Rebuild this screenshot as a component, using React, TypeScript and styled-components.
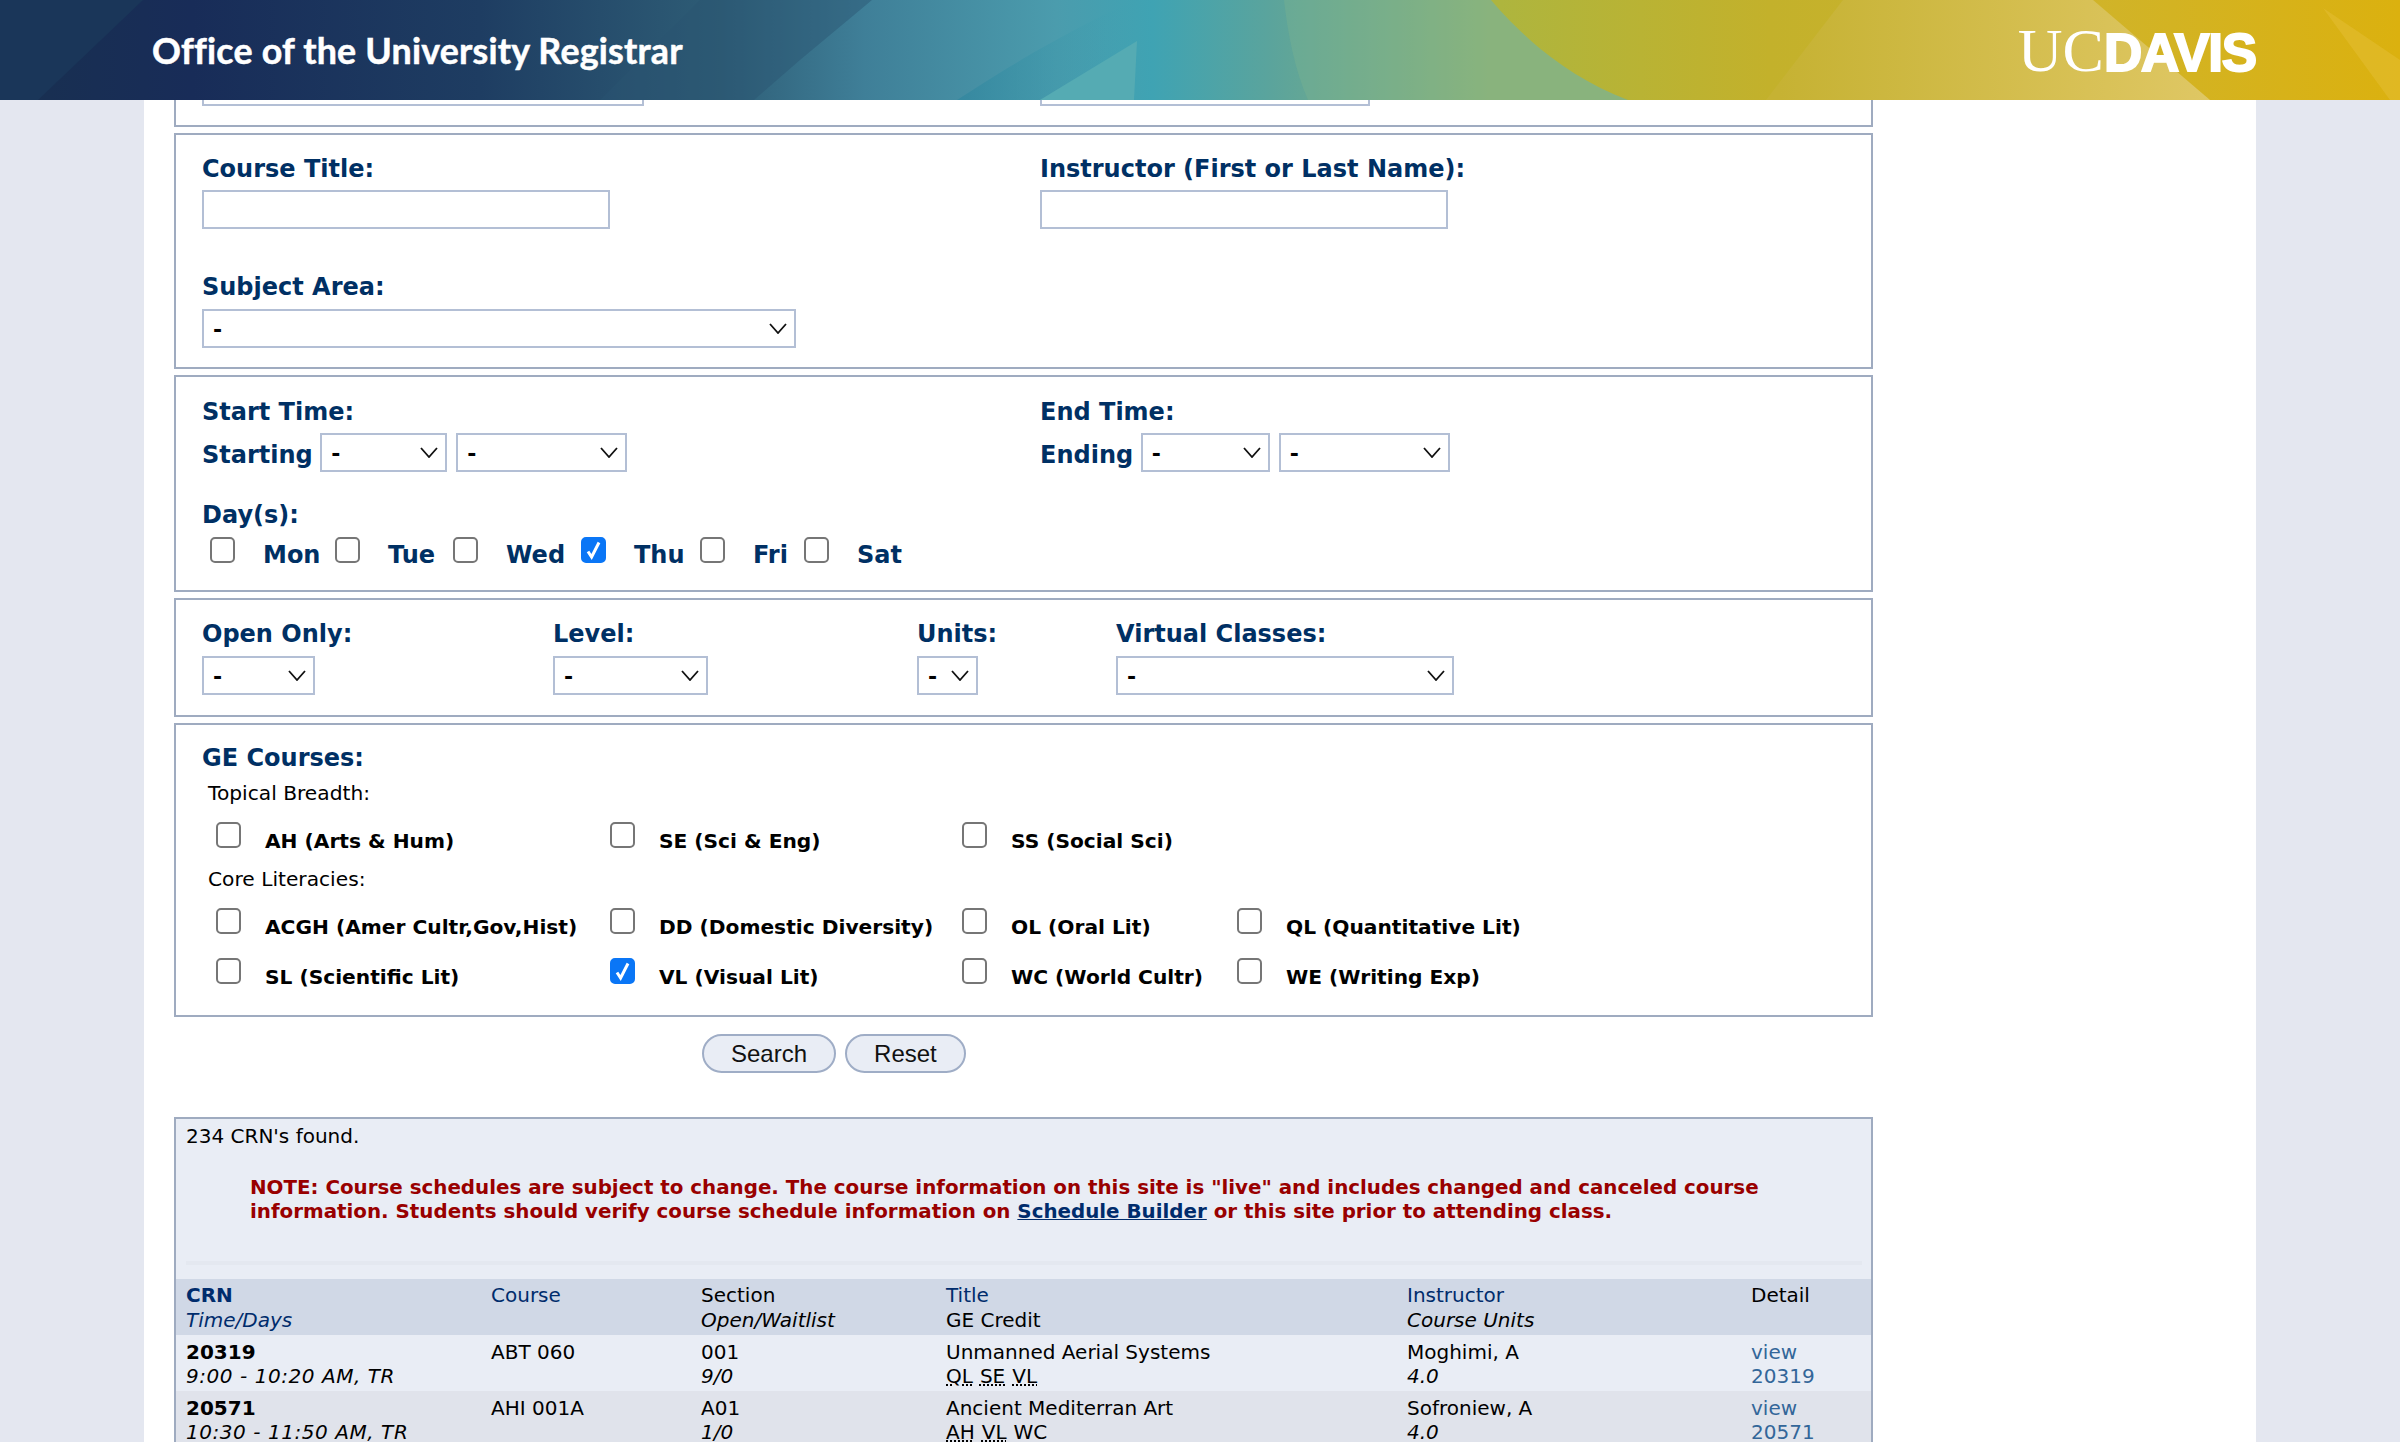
import React from "react";
import styled, { createGlobalStyle } from "styled-components";

const chevron =
  "url(\"data:image/svg+xml,%3Csvg xmlns='http://www.w3.org/2000/svg' width='18' height='11'%3E%3Cpath d='M1 1l8 9 8-9' fill='none' stroke='%23111' stroke-width='1.8'/%3E%3C/svg%3E\")";
const tick =
  "url(\"data:image/svg+xml,%3Csvg xmlns='http://www.w3.org/2000/svg' width='25' height='26'%3E%3Cpath d='M7 14.5l3.6 5.5L18 5.5' fill='none' stroke='white' stroke-width='3'/%3E%3C/svg%3E\")";

const GlobalStyle = createGlobalStyle`
    html, body {
        margin: 0;
        padding: 0;
        background: #e4e7f0;
    }
    body {
        font-family: "DejaVu Sans", Verdana, sans-serif;
        font-size: 20px;
        color: #000;
    }
`;

const Page = styled.div`
    height: 1442px;
    overflow: hidden;
`;

const Header = styled.header`
    position: fixed;
    top: 0;
    left: 0;
    right: 0;
    height: 100px;
    z-index: 10;
    display: flex;
    align-items: center;
    justify-content: space-between;
    padding: 0 144px 0 152px;
    overflow: hidden;
`;

const HeaderArt = styled.svg`
    position: absolute;
    top: 0;
    left: 0;
    z-index: -1;
`;

const SiteTitle = styled.div`
    font-family: Lato, "Open Sans", sans-serif;
    font-weight: 700;
    font-size: 35.8px;
    letter-spacing: 0.2px;
    -webkit-text-stroke: 0.5px #fff;
    color: #fff;
`;

const Logo = styled.div`
    display: flex;
    align-items: baseline;
    color: #fff;
    height: 52px;
    line-height: 52px;
`;

const LogoUc = styled.span`
    font-family: "Liberation Serif", serif;
    font-size: 62px;
    letter-spacing: 0;
`;

const LogoDavis = styled.span`
    font-family: "Liberation Sans", sans-serif;
    font-weight: 700;
    font-size: 53px;
    letter-spacing: -1.2px;
    -webkit-text-stroke: 2px #fff;
`;

const Sheet = styled.main`
    margin: 0 144px;
    height: 1442px;
    background: #fff;
    padding-left: 30px;
    box-sizing: border-box;
`;

const Box = styled.section<{ $top?: number; $bottom?: number }>`
    width: 1699px;
    box-sizing: border-box;
    border: 2px solid #9fabc0;
    margin-bottom: 6px;
    padding: ${(p) => p.$top ?? 18}px 26px ${(p) => p.$bottom ?? 19}px;
`;

const TwoCols = styled.div`
    display: grid;
    grid-template-columns: 838px 1fr;
`;

const FilterCols = styled.div`
    display: grid;
    grid-template-columns: 351px 364px 199px 1fr;
`;

const FieldLabel = styled.div<{ $gap?: number }>`
    box-sizing: border-box;
    height: 30px;
    padding-top: 1px;
    font-weight: 700;
    font-size: 24px;
    line-height: 30px;
    color: #003064;
    margin-bottom: ${(p) => p.$gap ?? 7}px;
`;

const TextInput = styled.input`
    display: block;
    box-sizing: border-box;
    width: 408px;
    height: 39px;
    border: 2px solid #b3bfd5;
    background: #fff;
    outline: none;
    border-radius: 0;
`;

const Select = styled.select<{ $width: number }>`
    display: block;
    appearance: none;
    box-sizing: border-box;
    width: ${(p) => p.$width}px;
    height: 39px;
    border: 2px solid #b3bfd5;
    border-radius: 0;
    background: #fff ${chevron} no-repeat right 7px center;
    padding: 2px 0 0 9px;
    font-family: "DejaVu Sans", sans-serif;
    font-size: 22px;
    font-weight: 700;
    color: #000;
`;

const SubjectGap = styled.div`
    height: 42px;
`;

const TimeRow = styled.div`
    display: flex;
    align-items: center;
    gap: 9px;
`;

const TimeName = styled(FieldLabel)`
    margin: 2px -1.5px 0 0;
`;

const DayGap = styled.div`
    height: 27px;
`;

const DayRow = styled.div`
    display: grid;
    grid-template-columns: 125px 118px 128px 119px 104px 1fr;
    margin-top: 8px;
    padding-left: 8px;
`;

const DayItem = styled.label`
    display: flex;
    align-items: flex-start;
    gap: 28px;
    font-weight: 700;
    font-size: 24px;
    line-height: 30px;
    color: #003064;
`;

const DayText = styled.span`
    margin-top: 3px;
`;

const Check = styled.input.attrs({ type: "checkbox", readOnly: true })`
    appearance: none;
    flex: none;
    box-sizing: border-box;
    width: 25px;
    height: 26px;
    margin: 0;
    border: 2px solid #767676;
    border-radius: 5px;
    background: #fff;

    &:checked {
        border-color: #0a76f6;
        background: #0a76f6 ${tick} no-repeat center;
    }
`;

const SubHead = styled.div<{ $first?: boolean }>`
    font-size: 20.2px;
    line-height: 28px;
    margin: ${(p) => (p.$first ? 7 : 0)}px 0 15px 6px;
`;

const CheckGrid = styled.div`
    display: grid;
    grid-template-columns: 394px 352px 275px 1fr;
    grid-auto-rows: 50px;
    margin-left: 14px;
`;

const CheckGridOneRow = styled(CheckGrid)`
    grid-auto-rows: 43px;
`;

const CheckItem = styled.label`
    display: flex;
    align-items: flex-start;
    gap: 24px;
    font-weight: 700;
    font-size: 20.2px;
    line-height: 30px;
`;

const CheckText = styled.span`
    margin-top: 4px;
    white-space: nowrap;
`;

const ButtonRow = styled.div`
    display: flex;
    gap: 9px;
    margin-top: 17px;
    padding-left: 528px;
`;

const Button = styled.button`
    box-sizing: border-box;
    height: 39px;
    padding: 0 27px;
    border: 2px solid #9fadc6;
    border-radius: 20px;
    background: #e9edf5;
    font-family: "Liberation Sans", Arial, sans-serif;
    font-size: 24px;
    color: #111;
`;

const Results = styled.section`
    width: 1699px;
    box-sizing: border-box;
    margin-top: 44px;
    border: 2px solid #9fabc0;
    border-bottom: none;
    background: #e9edf5;
    padding-top: 3px;
`;

const Found = styled.div`
    font-size: 20px;
    line-height: 28px;
    padding-left: 10px;
`;

const Note = styled.p`
    margin: 26px 40px 0 74px;
    font-size: 19.85px;
    font-weight: 700;
    line-height: 24px;
    color: #990000;

    a {
        color: #002c6c;
        text-decoration: underline;
    }
`;

const Rule = styled.div`
    height: 4px;
    margin: 37px 9px 14px 10px;
    background: #e4e8f0;
`;

const Table = styled.table`
    width: 100%;
    table-layout: fixed;
    border-collapse: collapse;
    font-size: 20px;
`;

const HeadRow = styled.tr`
    background: #d0d8e6;

    td {
        padding: 4px 10px 2px;
        line-height: 25px;
        vertical-align: top;
    }
`;

const BodyRow = styled.tr<{ $alt?: boolean }>`
    background: ${(p) => (p.$alt ? "#e0e3eb" : "#e9edf5")};

    td {
        padding: 5px 10px 3px;
        line-height: 24px;
        vertical-align: top;
    }
`;

const Line = styled.div<{ $bold?: boolean; $italic?: boolean; $color?: string; $track?: number }>`
    font-weight: ${(p) => (p.$bold ? 700 : 400)};
    font-style: ${(p) => (p.$italic ? "italic" : "normal")};
    color: ${(p) => p.$color ?? "inherit"};
    letter-spacing: ${(p) => p.$track ?? 0}px;
    white-space: nowrap;
`;

const Abbr = styled.abbr`
    text-decoration: underline dotted;
    margin-right: 7px;
`;

const DetailLink = styled.a`
    display: block;
    color: #336699;
    text-decoration: none;
`;

const NAVY = "#002c6c";
const days = [
    { name: "Mon" },
    { name: "Tue" },
    { name: "Wed" },
    { name: "Thu", on: true },
    { name: "Fri" },
    { name: "Sat" },
];

const Dash = () => <option>-</option>;

const GeCheck = ({ text, on }: { text: string; on?: boolean }) => (
    <CheckItem>
        <Check checked={!!on} />
        <CheckText>{text}</CheckText>
    </CheckItem>
);

const Banner = () => (
    <HeaderArt width="2400" height="100" viewBox="0 0 2400 100">
        <defs>
            <linearGradient id="base" x1="0" x2="2400" y1="0" y2="0" gradientUnits="userSpaceOnUse">
                <stop offset="0" stopColor="#183050" />
                <stop offset="0.08" stopColor="#182c58" />
                <stop offset="0.2" stopColor="#1e3d62" />
                <stop offset="0.3" stopColor="#2e5d76" />
                <stop offset="0.36" stopColor="#3f7f98" />
                <stop offset="0.44" stopColor="#4b9cad" />
                <stop offset="0.48" stopColor="#3fa3b3" />
                <stop offset="0.53" stopColor="#5ba49c" />
                <stop offset="0.62" stopColor="#8fb374" />
                <stop offset="1" stopColor="#8fb374" />
            </linearGradient>
            <linearGradient id="band" x1="960" x2="1137" y1="0" y2="0" gradientUnits="userSpaceOnUse">
                <stop offset="0" stopColor="#33879f" stopOpacity="0.8" />
                <stop offset="1" stopColor="#3fa3b3" stopOpacity="0" />
            </linearGradient>
            <linearGradient id="gold" x1="1500" x2="2400" y1="0" y2="0" gradientUnits="userSpaceOnUse">
                <stop offset="0" stopColor="#aeb53e" />
                <stop offset="0.3" stopColor="#c3b12b" />
                <stop offset="0.62" stopColor="#cfb42c" />
                <stop offset="1" stopColor="#dbb10f" />
            </linearGradient>
            <linearGradient id="sheen" x1="1780" x2="2210" y1="0" y2="0" gradientUnits="userSpaceOnUse">
                <stop offset="0" stopColor="#c6b233" />
                <stop offset="1" stopColor="#dfc764" />
            </linearGradient>
        </defs>
        <rect width="2400" height="100" fill="url(#base)" />
        <path d="M0 0H143L38 100H0Z" fill="#1a3659" />
        <path d="M872 0L800 60L754 100H600L700 0Z" fill="#2a5470" opacity="0.45" />
        <path d="M1135 0C1070 30 1010 65 957 100H1040L1137 41V0Z" fill="url(#band)" />
        <path d="M1137 41L1040 100H1134Z" fill="#55abb3" />
        <path d="M1284 0C1288 35 1295 70 1308 100H1628C1570 78 1525 40 1491 0Z" fill="#7db58e" opacity="0.35" />
        <path d="M1491 0C1525 40 1570 78 1628 100H2400V0Z" fill="url(#gold)" />
        <path d="M1843 0L1766 100H2210L2093 0Z" fill="url(#sheen)" />
        <path d="M2323 8L2400 60V100H2390Z" fill="#e3bd33" opacity="0.55" />
    </HeaderArt>
);

const App: React.FC = () => (
    <Page>
        <GlobalStyle />
        <Header>
            <Banner />
            <SiteTitle>Office of the University Registrar</SiteTitle>
            <Logo>
                <LogoUc>UC</LogoUc>
                <LogoDavis>DAVIS</LogoDavis>
            </Logo>
        </Header>
        <Sheet>
            <Box $top={28}>
                <TwoCols>
                    <div>
                        <FieldLabel>Quarter:</FieldLabel>
                        <Select $width={442}><option>Spring Quarter 2025</option></Select>
                    </div>
                    <div>
                        <FieldLabel>CRN:</FieldLabel>
                        <Select $width={330}><Dash /></Select>
                    </div>
                </TwoCols>
            </Box>

            <Box>
                <TwoCols>
                    <div>
                        <FieldLabel>Course Title:</FieldLabel>
                        <TextInput />
                    </div>
                    <div>
                        <FieldLabel>Instructor (First or Last Name):</FieldLabel>
                        <TextInput />
                    </div>
                </TwoCols>
                <SubjectGap />
                <FieldLabel $gap={8}>Subject Area:</FieldLabel>
                <Select $width={594}><Dash /></Select>
            </Box>

            <Box $top={19} $bottom={20}>
                <TwoCols>
                    <div>
                        <FieldLabel>Start Time:</FieldLabel>
                        <TimeRow>
                            <TimeName>Starting</TimeName>
                            <Select $width={127}><Dash /></Select>
                            <Select $width={171}><Dash /></Select>
                        </TimeRow>
                    </div>
                    <div>
                        <FieldLabel>End Time:</FieldLabel>
                        <TimeRow>
                            <TimeName>Ending</TimeName>
                            <Select $width={129}><Dash /></Select>
                            <Select $width={171}><Dash /></Select>
                        </TimeRow>
                    </div>
                </TwoCols>
                <DayGap />
                <FieldLabel $gap={0}>Day(s):</FieldLabel>
                <DayRow>
                    {days.map((d) => (
                        <DayItem key={d.name}>
                            <Check checked={!!d.on} />
                            <DayText>{d.name}</DayText>
                        </DayItem>
                    ))}
                </DayRow>
            </Box>

            <Box $bottom={20}>
                <FilterCols>
                    <div>
                        <FieldLabel $gap={8}>Open Only:</FieldLabel>
                        <Select $width={113}><Dash /></Select>
                    </div>
                    <div>
                        <FieldLabel $gap={8}>Level:</FieldLabel>
                        <Select $width={155}><Dash /></Select>
                    </div>
                    <div>
                        <FieldLabel $gap={8}>Units:</FieldLabel>
                        <Select $width={61}><Dash /></Select>
                    </div>
                    <div>
                        <FieldLabel $gap={8}>Virtual Classes:</FieldLabel>
                        <Select $width={338}><Dash /></Select>
                    </div>
                </FilterCols>
            </Box>

            <Box $top={17} $bottom={7}>
                <FieldLabel $gap={0}>GE Courses:</FieldLabel>
                <SubHead $first>Topical Breadth:</SubHead>
                <CheckGridOneRow>
                    <GeCheck text="AH (Arts & Hum)" />
                    <GeCheck text="SE (Sci & Eng)" />
                    <GeCheck text="SS (Social Sci)" />
                </CheckGridOneRow>
                <SubHead>Core Literacies:</SubHead>
                <CheckGrid>
                    <GeCheck text="ACGH (Amer Cultr,Gov,Hist)" />
                    <GeCheck text="DD (Domestic Diversity)" />
                    <GeCheck text="OL (Oral Lit)" />
                    <GeCheck text="QL (Quantitative Lit)" />
                    <GeCheck text="SL (Scientific Lit)" />
                    <GeCheck text="VL (Visual Lit)" on />
                    <GeCheck text="WC (World Cultr)" />
                    <GeCheck text="WE (Writing Exp)" />
                </CheckGrid>
            </Box>

            <ButtonRow>
                <Button>Search</Button>
                <Button>Reset</Button>
            </ButtonRow>

            <Results>
                <Found>234 CRN's found.</Found>
                <Note>
                    NOTE: Course schedules are subject to change. The course information on this site is "live" and includes changed and canceled course information. Students should verify course schedule information on <a href="#">Schedule Builder</a> or this site prior to attending class.
                </Note>
                <Rule />
                <Table>
                    <colgroup>
                        <col width="305" />
                        <col width="210" />
                        <col width="245" />
                        <col width="461" />
                        <col width="344" />
                        <col />
                    </colgroup>
                    <tbody>
                        <HeadRow>
                            <td>
                                <Line $bold $color={NAVY}>CRN</Line>
                                <Line $italic $color={NAVY}>Time/Days</Line>
                            </td>
                            <td><Line $color={NAVY}>Course</Line></td>
                            <td>
                                <Line>Section</Line>
                                <Line $italic>Open/Waitlist</Line>
                            </td>
                            <td>
                                <Line $color={NAVY}>Title</Line>
                                <Line>GE Credit</Line>
                            </td>
                            <td>
                                <Line $color={NAVY}>Instructor</Line>
                                <Line $italic>Course Units</Line>
                            </td>
                            <td><Line>Detail</Line></td>
                        </HeadRow>
                        <BodyRow>
                            <td>
                                <Line $bold>20319</Line>
                                <Line $italic $track={0.55}>9:00 - 10:20 AM, TR</Line>
                            </td>
                            <td><Line>ABT 060</Line></td>
                            <td>
                                <Line>001</Line>
                                <Line $italic>9/0</Line>
                            </td>
                            <td>
                                <Line>Unmanned Aerial Systems</Line>
                                <Line><Abbr>QL</Abbr><Abbr>SE</Abbr><Abbr>VL</Abbr></Line>
                            </td>
                            <td>
                                <Line>Moghimi, A</Line>
                                <Line $italic>4.0</Line>
                            </td>
                            <td>
                                <DetailLink href="#">view</DetailLink>
                                <DetailLink href="#">20319</DetailLink>
                            </td>
                        </BodyRow>
                        <BodyRow $alt>
                            <td>
                                <Line $bold>20571</Line>
                                <Line $italic $track={0.55}>10:30 - 11:50 AM, TR</Line>
                            </td>
                            <td><Line>AHI 001A</Line></td>
                            <td>
                                <Line>A01</Line>
                                <Line $italic>1/0</Line>
                            </td>
                            <td>
                                <Line>Ancient Mediterran Art</Line>
                                <Line><Abbr>AH</Abbr><Abbr>VL</Abbr>WC</Line>
                            </td>
                            <td>
                                <Line>Sofroniew, A</Line>
                                <Line $italic>4.0</Line>
                            </td>
                            <td>
                                <DetailLink href="#">view</DetailLink>
                                <DetailLink href="#">20571</DetailLink>
                            </td>
                        </BodyRow>
                    </tbody>
                </Table>
            </Results>
        </Sheet>
    </Page>
);

export default App;
